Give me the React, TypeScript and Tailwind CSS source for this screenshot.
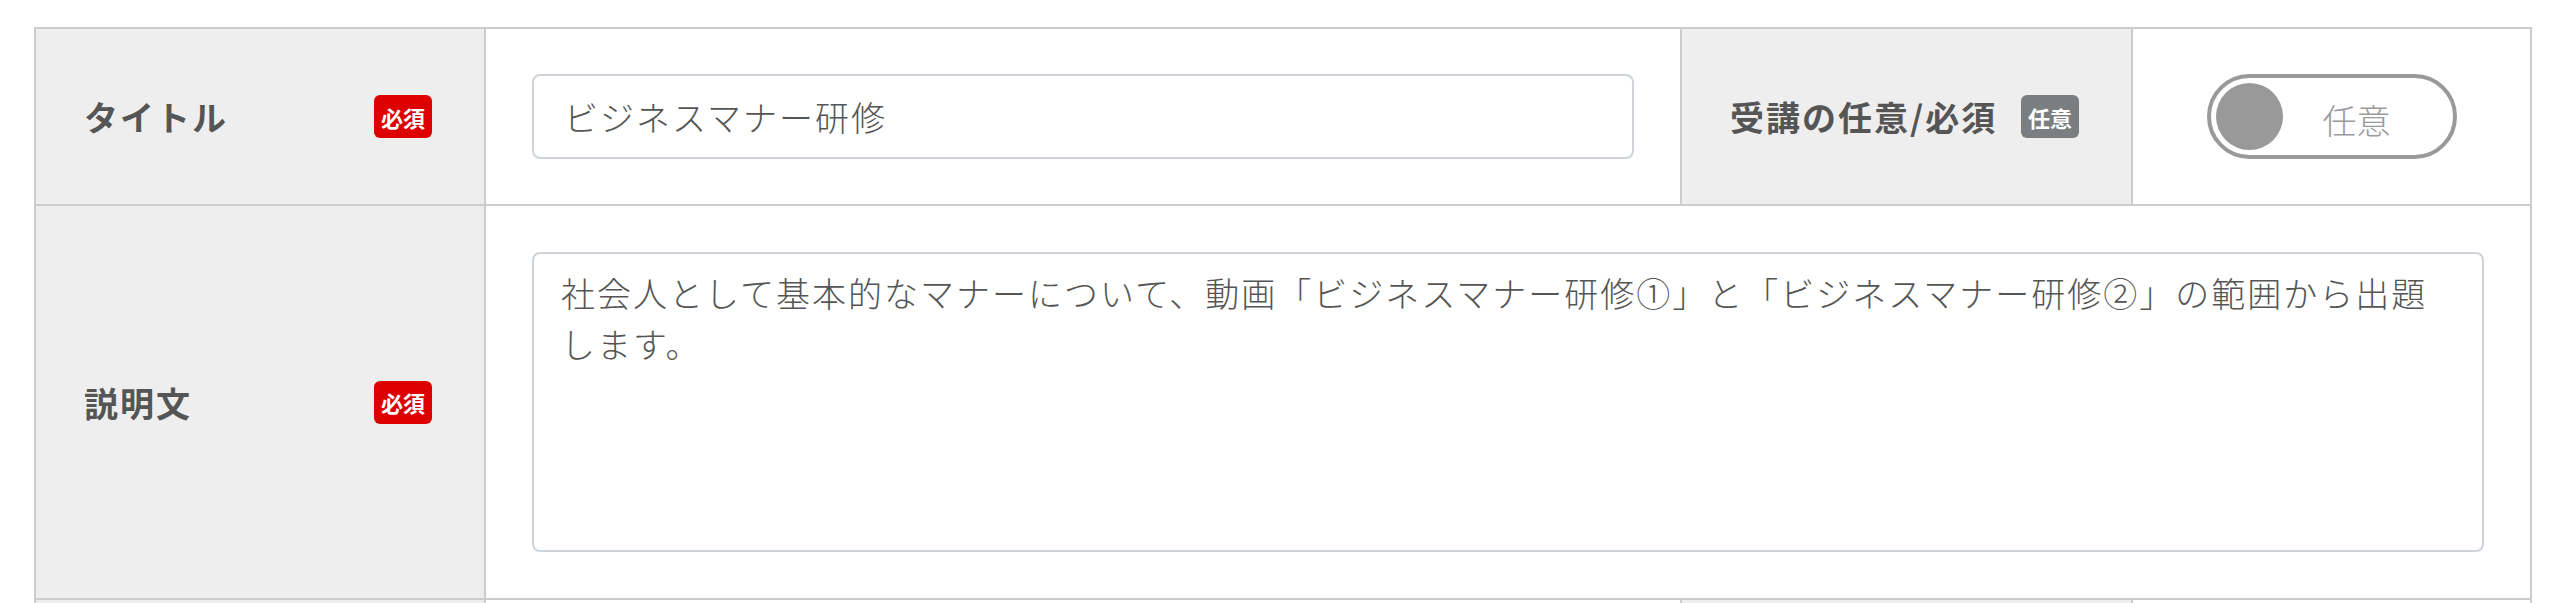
import React from "react";

function Badge({ text, tone }: { text: string; tone: "red" | "gray" }) {
  return (
    <span
      className={
        "flex h-[43px] w-[58px] items-center justify-center rounded-[6px] text-[22px] font-bold leading-none text-white " +
        (tone === "red" ? "bg-[#dd0000]" : "bg-[#7b7e81]")
      }
    >
      {text}
    </span>
  );
}

function LabelCell({
  label,
  badge,
  tone,
  width,
  border = true,
}: {
  label: string;
  badge: string;
  tone: "red" | "gray";
  width: string;
  border?: boolean;
}) {
  return (
    <div
      className={
        "flex shrink-0 items-center justify-between bg-[#eeeeee] pl-[48px] pr-[52px] " +
        width +
        (border ? " border-r-2 border-[#cccccc]" : "")
      }
    >
      <span className="text-[34px] font-bold tracking-[2px] text-[#555555]">{label}</span>
      <Badge text={badge} tone={tone} />
    </div>
  );
}

export default function App() {
  return (
    <div className="h-[603px] overflow-hidden bg-white px-[34px] pt-[27px] font-['Noto_Sans_CJK_JP',sans-serif]">
      <div className="border-2 border-b-0 border-[#cccccc]">
        {/* Row 1 */}
        <div className="flex border-b-2 border-[#cccccc]">
          <LabelCell label="タイトル" badge="必須" tone="red" width="w-[450px]" />
          <div className="flex-1 border-r-2 border-[#cccccc] px-[46px] py-[45px]">
            <input
              type="text"
              defaultValue="ビジネスマナー研修"
              readOnly
              className="block h-[85px] w-full rounded-[8px] border-2 border-[#cfd4da] bg-white px-[30px] text-[34px] font-light tracking-[2px] text-[#555555] outline-none"
            />
          </div>
          <LabelCell label="受講の任意/必須" badge="任意" tone="gray" width="w-[451px]" />
          <div className="flex w-[397px] shrink-0 items-center justify-center">
            <div className="flex h-[85px] w-[250px] items-center rounded-full border-4 border-[#999999] pl-[5px]">
              <span className="h-[67px] w-[67px] shrink-0 rounded-full bg-[#999999]" />
              <span className="ml-[40px] pt-[6px] text-[34px] font-light leading-none text-[#9a9a9a]">
                任意
              </span>
            </div>
          </div>
        </div>

        {/* Row 2 */}
        <div className="flex border-b-2 border-[#cccccc]">
          <LabelCell label="説明文" badge="必須" tone="red" width="w-[450px]" />
          <div className="flex-1 p-[46px]">
            <textarea
              readOnly
              defaultValue="社会人として基本的なマナーについて、動画「ビジネスマナー研修①」と「ビジネスマナー研修②」の範囲から出題します。"
              className="block h-[300px] w-full resize-none rounded-[8px] border-2 border-[#cfd4da] bg-white px-[27px] py-[13px] text-[34px] font-light leading-[1.5] tracking-[2px] text-[#555555] outline-none"
            />
          </div>
        </div>

        {/* Row 3 (partially visible) */}
        <div className="flex h-[176px]">
          <div className="w-[450px] shrink-0 border-r-2 border-[#cccccc] bg-[#eeeeee]" />
          <div className="flex-1 border-r-2 border-[#cccccc]" />
          <div className="w-[451px] shrink-0 border-r-2 border-[#cccccc] bg-[#eeeeee]" />
          <div className="w-[397px] shrink-0" />
        </div>
      </div>
    </div>
  );
}
